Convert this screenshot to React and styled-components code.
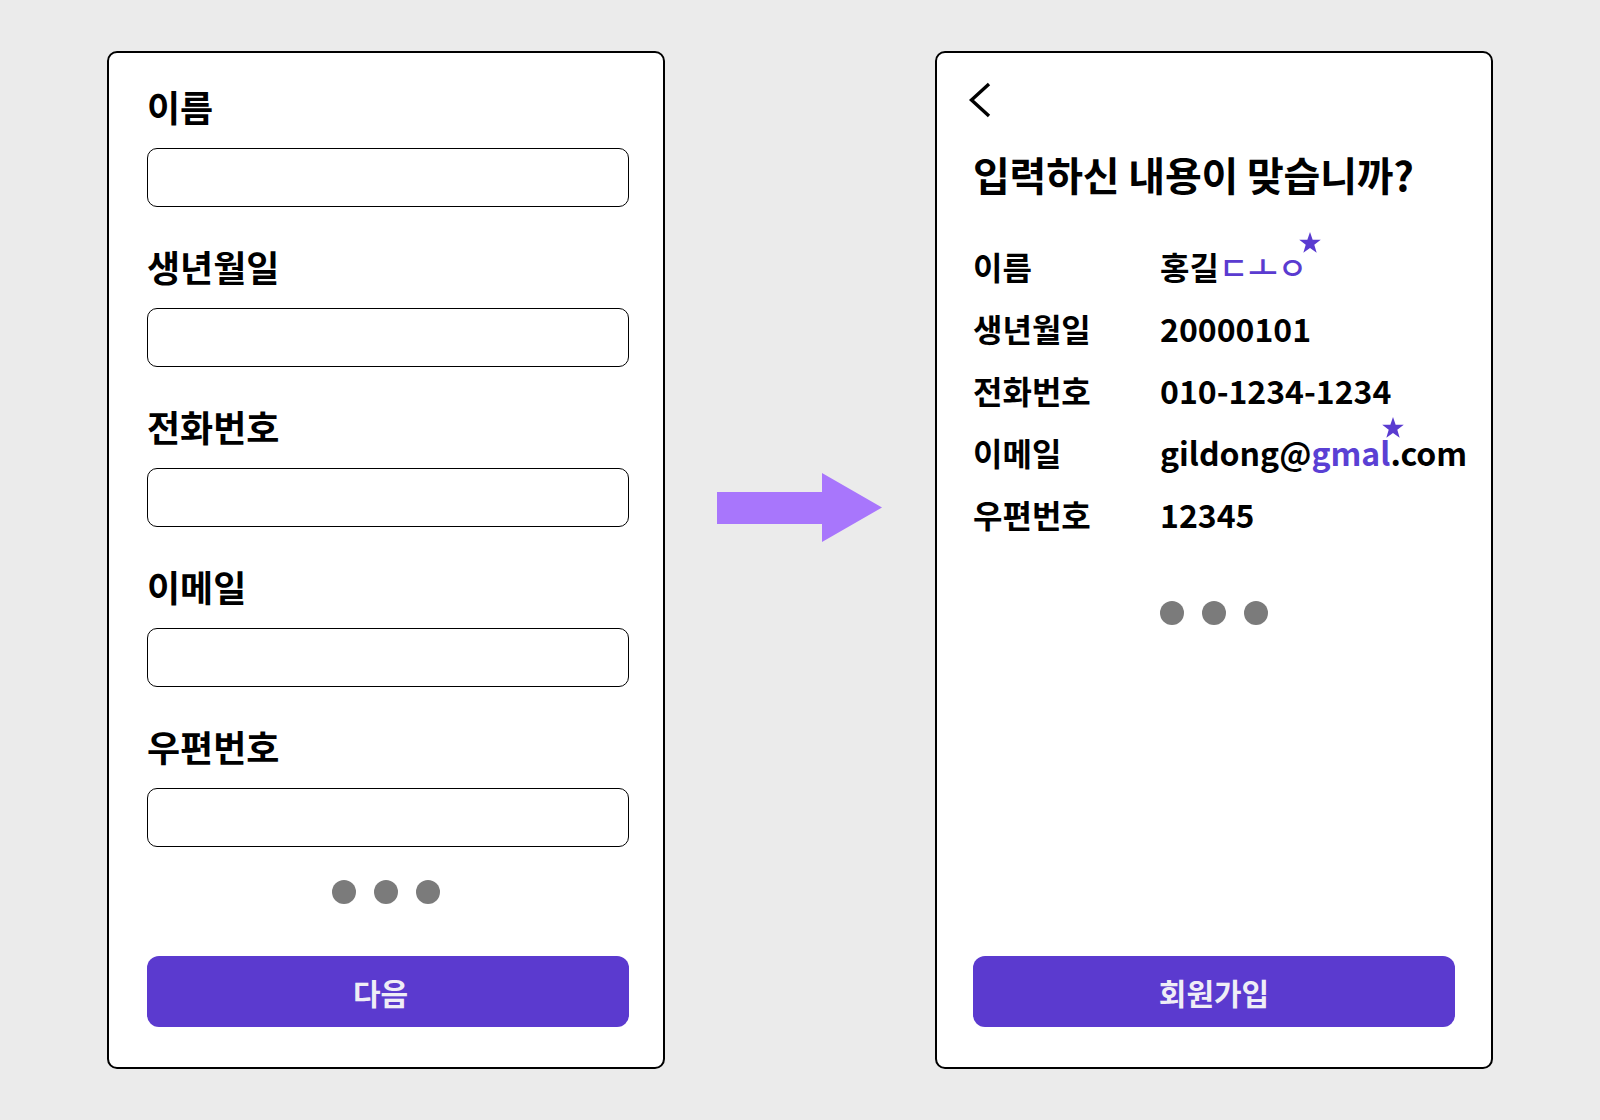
import React from "react";
import styled, { createGlobalStyle } from "styled-components";

const GlobalStyle = createGlobalStyle`
  html, body { margin: 0; padding: 0; }
  body {
    background: #ebebeb;
    font-family: "Noto Sans CJK KR", "Noto Sans", sans-serif;
    color: #000;
  }
`;

const Page = styled.div`
  width: 1600px;
  height: 1120px;
  display: flex;
  align-items: center;
  justify-content: center;
  gap: 52px;
`;

const Panel = styled.section`
  box-sizing: border-box;
  width: 558px;
  height: 1018px;
  background: #fff;
  border: 2px solid #000;
  border-radius: 10px;
  display: flex;
  flex-direction: column;
  padding: ${(p) => p.$pt}px ${(p) => p.$pr}px 40px ${(p) => p.$pl}px;
`;

const Form = styled.div`
  display: flex;
  flex-direction: column;
  gap: 39px;
`;

const Field = styled.label`
  display: flex;
  flex-direction: column;
  gap: 22px;
`;

const FieldLabel = styled.span`
  font-size: 36px;
  line-height: 40px;
  font-weight: 700;
`;

const TextInput = styled.input`
  box-sizing: border-box;
  width: 482px;
  height: 59px;
  border: 1px solid #000;
  border-radius: 10px;
  background: #fff;
  outline: none;
  padding: 0 16px;
  font: inherit;
`;

const Dots = styled.div`
  display: flex;
  gap: 18px;
  margin-top: ${(p) => p.$mt}px;
  justify-content: ${(p) => (p.$center ? "center" : "flex-start")};
  padding-left: ${(p) => p.$pl || 0}px;
  padding-right: ${(p) => p.$pr || 0}px;
`;

const Dot = styled.span`
  width: 24px;
  height: 24px;
  border-radius: 50%;
  background: #7b7b7b;
`;

const PrimaryButton = styled.button`
  margin-top: auto;
  box-sizing: border-box;
  width: 482px;
  height: 71px;
  border: none;
  border-radius: 12px;
  background: #5b3acf;
  color: #efedf6;
  font-family: "Noto Sans CJK KR", "Noto Sans", sans-serif;
  font-size: 30px;
  font-weight: 700;
  padding: 0 ${(p) => p.$shift || 0}px 0 0;
  cursor: pointer;
`;

const ArrowBox = styled.div`
  width: 166px;
  height: 70px;
  margin-bottom: 105px;
  display: flex;
`;

const BackButton = styled.button`
  width: 24px;
  height: 36px;
  padding: 0;
  margin-left: -5px;
  border: none;
  background: none;
  display: flex;
`;

const Title = styled.h1`
  margin: 32px 0 0;
  font-size: 40px;
  line-height: 48px;
  font-weight: 700;
  letter-spacing: -0.2px;
  white-space: nowrap;
`;

const InfoList = styled.dl`
  margin: 48px 0 0;
  display: grid;
  grid-template-columns: 187px 1fr;
  row-gap: 22px;
`;

const InfoLabel = styled.dt`
  font-size: 32px;
  line-height: 40px;
  font-weight: 700;
  margin: 0;
`;

const InfoValue = styled.dd`
  font-size: 32px;
  line-height: 40px;
  font-weight: 700;
  margin: 0;
  white-space: nowrap;
`;

const Accent = styled.span`
  color: #5a40d4;
  position: relative;
`;

const Jamo = styled.span`
  position: relative;
  color: #5a3bd0;
  font-weight: 500;
  line-height: 1;
`;

const Star = styled.svg`
  position: absolute;
  width: 22px;
  height: 21px;
  top: ${(p) => p.$top}px;
  left: ${(p) => p.$left};
  transform: ${(p) => p.$tx || "none"};
`;

const StarIcon = (props) => (
  <Star viewBox="0 0 24 23" {...props}>
    <polygon
      fill="#5a3bd0"
      points="12,0 14.9,8.4 23.8,8.6 16.7,14 19.3,22.6 12,17.5 4.7,22.6 7.3,14 0.2,8.6 9.1,8.4"
    />
  </Star>
);

const fields = ["이름", "생년월일", "전화번호", "이메일", "우편번호"];

export default function App() {
  return (
    <>
      <GlobalStyle />
      <Page>
        <Panel $pt={33} $pl={38} $pr={34}>
          <Form>
            {fields.map((f) => (
              <Field key={f}>
                <FieldLabel>{f}</FieldLabel>
                <TextInput type="text" />
              </Field>
            ))}
          </Form>
          <Dots $mt={33} $center $pr={4}>
            <Dot />
            <Dot />
            <Dot />
          </Dots>
          <PrimaryButton $shift={15}>다음</PrimaryButton>
        </Panel>

        <ArrowBox>
          <svg width="166" height="70" viewBox="0 0 166 70">
            <polygon
              fill="#a876fc"
              points="0,19 105,19 105,0 165,34.5 105,69 105,51 0,51"
            />
          </svg>
        </ArrowBox>

        <Panel $pt={29} $pl={36} $pr={36}>
          <BackButton aria-label="뒤로">
            <svg width="24" height="36" viewBox="0 0 24 36">
              <polyline
                points="21,2 3.5,18 21,34"
                fill="none"
                stroke="#000"
                strokeWidth="3.4"
              />
            </svg>
          </BackButton>
          <Title>입력하신 내용이 맞습니까?</Title>
          <InfoList>
            <InfoLabel>이름</InfoLabel>
            <InfoValue>
              홍길
              <Jamo>
                ㄷㅗㅇ
                <StarIcon $top={-11} $left="calc(100% - 8px)" />
              </Jamo>
            </InfoValue>
            <InfoLabel>생년월일</InfoLabel>
            <InfoValue>20000101</InfoValue>
            <InfoLabel>전화번호</InfoLabel>
            <InfoValue>010-1234-1234</InfoValue>
            <InfoLabel>이메일</InfoLabel>
            <InfoValue>
              gildong@
              <Accent>
                gma
                <Accent>
                  l
                  <StarIcon
                    $top={-12}
                    $left="50%"
                    $tx="translateX(calc(-50% + 8px))"
                  />
                </Accent>
              </Accent>
              .com
            </InfoValue>
            <InfoLabel>우편번호</InfoLabel>
            <InfoValue>12345</InfoValue>
          </InfoList>
          <Dots $mt={67} $pl={187}>
            <Dot />
            <Dot />
            <Dot />
          </Dots>
          <PrimaryButton>회원가입</PrimaryButton>
        </Panel>
      </Page>
    </>
  );
}
